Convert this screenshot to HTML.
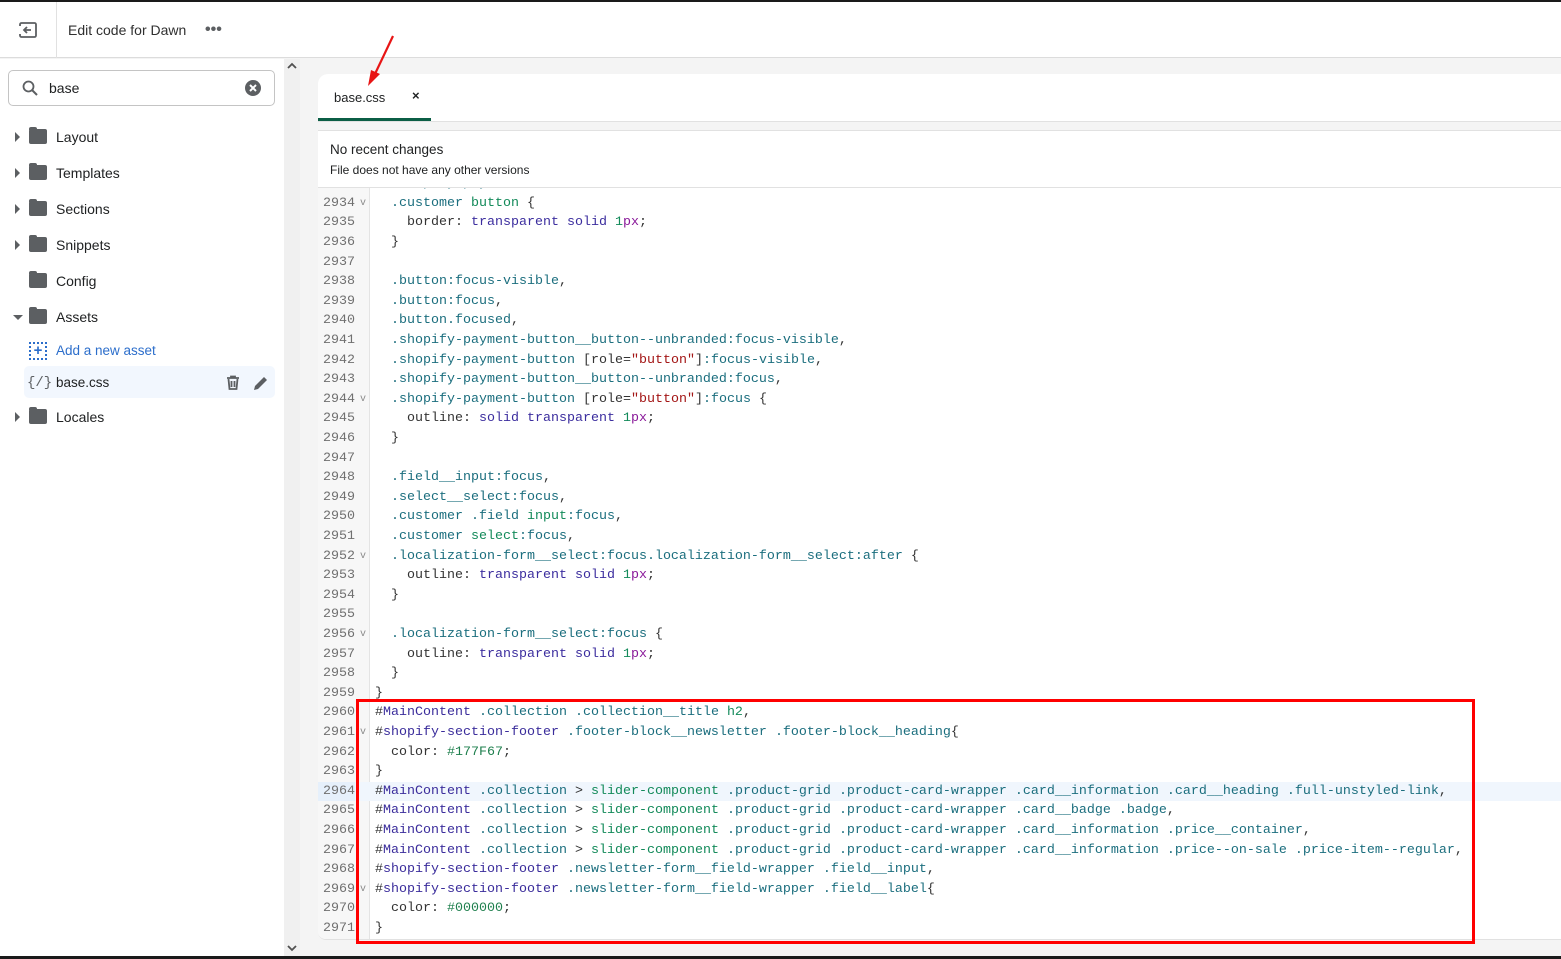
<!DOCTYPE html>
<html><head><meta charset="utf-8">
<style>
*{box-sizing:border-box;margin:0;padding:0}
body{width:1561px;height:959px;overflow:hidden;background:#f4f4f4;font-family:"Liberation Sans",sans-serif;position:relative;color:#202223}
.abs{position:absolute}
#topbar{left:0;top:0;width:1561px;height:2px;background:#1a1a1a}
#header{left:0;top:2px;width:1561px;height:56px;background:#fff;border-bottom:1px solid #dcdcdc}
#side{left:0;top:59px;width:284px;height:898px;background:#fff}
#sb{left:284px;top:59px;width:16px;height:898px;background:#f0f0f0}
#bottom{left:0;top:956px;width:1561px;height:3px;background:#1a1a1a}
.item{position:absolute;left:0;height:24px;font-size:14px;line-height:24px;color:#202223}
.item .tri{position:absolute;left:15px;top:7px;width:0;height:0;border-top:5px solid transparent;border-bottom:5px solid transparent;border-left:5px solid #5c5f62}
.item .tri.down{left:13px;top:10px;border-left:5px solid transparent;border-right:5px solid transparent;border-top:5px solid #5c5f62;border-bottom:0}
.item .fold{position:absolute;left:29px;top:4px;width:18px;height:15px;background:#5c5f62;border-radius:2px}
.item .fold:before{content:"";position:absolute;left:0;top:-2px;width:8px;height:3px;background:#5c5f62;border-radius:2px 2px 0 0}
.item .lbl{position:absolute;left:56px;top:0;white-space:nowrap}
#panel{left:318px;top:74px;width:1243px;height:866px;background:#f4f4f4}
#tabs{left:318px;top:74px;width:1243px;height:48px;background:#fff;border-radius:10px 0 0 0;border-bottom:1px solid #e1e1e1}
#info{left:318px;top:130px;width:1243px;height:58px;background:#fff;border-top:1px solid #e1e1e1;border-bottom:1px solid #e1e1e1}
#code{left:318px;top:188px;width:1243px;height:752px;background:#fff;overflow:hidden;border-radius:0 0 0 8px;border-bottom:1px solid #e1e1e1}
#gut{position:absolute;left:0;top:0;width:52px;height:752px;background:#f7f7f7;border-right:1px solid #e4e4e4}
.ln{position:absolute;left:0;margin-top:2px;width:1243px;height:19.6px;font-family:"Liberation Mono",monospace;font-size:13.33px;line-height:19.6px;white-space:pre;color:#333}
.ln .no{position:absolute;left:0;width:37px;text-align:right;color:#707070}
.ln .fo{position:absolute;left:42px;color:#8a8a8a;font-size:10px}
.ln .tx{position:absolute;left:57px}
.hl{background:#f0f6fd}
.hl .no{background:#e6f0fb}
.c{color:#1b6e7e}.t{color:#138a5a}.i{color:#3a2c9b}.k{color:#3b2d9e}.n{color:#138a5a}.u{color:#8a1a9a}.s{color:#a31515}.h{color:#1e7f4d}
</style></head><body>
<div class="abs" id="topbar"></div>
<div class="abs" id="header">
  <svg class="abs" style="left:19px;top:20px" width="18" height="16" viewBox="0 0 18 16"><rect x="1" y="1" width="16" height="14" rx="1.5" fill="none" stroke="#5c5f62" stroke-width="1.8"/><path d="M12 8H5M8 5L5 8l3 3" fill="none" stroke="#5c5f62" stroke-width="1.8"/><rect x="0" y="4" width="3" height="8" fill="#fff"/></svg>
  <div class="abs" style="left:56px;top:0;width:1px;height:56px;background:#e1e1e1"></div>
  <div class="abs" style="left:68px;top:20px;font-size:14px;color:#303030">Edit code for Dawn</div>
  <div class="abs" style="left:205px;top:19px;font-size:16px;color:#5c5f62;font-weight:bold">•••</div>
</div>
<div class="abs" id="side">
  <div class="abs" style="left:8px;top:11px;width:267px;height:36px;border:1px solid #c4c4c4;border-radius:5px">
    <svg class="abs" style="left:13px;top:9px" width="16" height="16" viewBox="0 0 16 16"><circle cx="6.5" cy="6.5" r="5" fill="none" stroke="#5c5f62" stroke-width="1.8"/><path d="M10 10l5 5" stroke="#5c5f62" stroke-width="2"/></svg>
    <div class="abs" style="left:40px;top:9px;font-size:14px;color:#202223">base</div>
    <svg class="abs" style="left:236px;top:9px" width="16" height="16" viewBox="0 0 16 16"><circle cx="8" cy="8" r="8" fill="#5c5f62"/><path d="M5 5l6 6M11 5l-6 6" stroke="#fff" stroke-width="2"/></svg>
  </div>
  <div class="item" style="top:66px;width:284px"><span class="tri"></span><span class="fold"></span><span class="lbl">Layout</span></div>
  <div class="item" style="top:102px;width:284px"><span class="tri"></span><span class="fold"></span><span class="lbl">Templates</span></div>
  <div class="item" style="top:138px;width:284px"><span class="tri"></span><span class="fold"></span><span class="lbl">Sections</span></div>
  <div class="item" style="top:174px;width:284px"><span class="tri"></span><span class="fold"></span><span class="lbl">Snippets</span></div>
  <div class="item" style="top:210px;width:284px"><span class="fold"></span><span class="lbl">Config</span></div>
  <div class="item" style="top:246px;width:284px"><span class="tri down"></span><span class="fold"></span><span class="lbl">Assets</span></div>
  <div class="item" style="top:280px;width:284px">
    <div class="abs" style="left:29px;top:3px;width:18px;height:18px;border:2px dotted #2c6ecb"></div>
    <div class="abs" style="left:31px;top:0px;width:14px;text-align:center;color:#2c6ecb;font-size:15px;font-weight:bold">+</div>
    <span class="lbl" style="color:#2c6ecb;font-size:13.5px">Add a new asset</span></div>
  <div class="abs" style="left:24px;top:307px;width:251px;height:32px;background:#f2f7fe;border-radius:5px"></div>
  <div class="item" style="top:312px;width:284px">
    <span class="abs" style="left:27px;top:0;font-size:14px;color:#5c5f62;font-family:'Liberation Mono',monospace">{/}</span>
    <span class="lbl" style="font-size:13.5px">base.css</span>
    <svg class="abs" style="left:225px;top:4px" width="16" height="16" viewBox="0 0 16 16"><path d="M2 3h12M6 3V1.5h4V3M3.5 4l1 10h7l1-10M6.5 6v6M9.5 6v6" fill="none" stroke="#5c5f62" stroke-width="1.8"/></svg>
    <svg class="abs" style="left:252px;top:3px" width="18" height="18" viewBox="0 0 18 18"><path d="M2 16l1-4L12 3l3 3-9 9z" fill="#5c5f62"/></svg>
  </div>
  <div class="item" style="top:346px;width:284px"><span class="tri"></span><span class="fold"></span><span class="lbl">Locales</span></div>
</div>
<div class="abs" id="sb">
  <svg class="abs" style="left:3px;top:3px" width="10" height="8" viewBox="0 0 10 8"><path d="M1 6l4-4 4 4" fill="none" stroke="#505050" stroke-width="1.8"/></svg>
  <svg class="abs" style="left:3px;top:885px" width="10" height="8" viewBox="0 0 10 8"><path d="M1 2l4 4 4-4" fill="none" stroke="#505050" stroke-width="1.8"/></svg>
</div>
<div class="abs" id="panel"></div>
<div class="abs" id="tabs">
  <div class="abs" style="left:16px;top:16px;font-size:13px;color:#202223">base.css</div>
  <div class="abs" style="left:94px;top:14px;font-size:13px;color:#202223;font-weight:bold">×</div>
  <div class="abs" style="left:0;top:44px;width:113px;height:3px;background:#0b5e45"></div>
</div>
<svg class="abs" style="left:360px;top:34px" width="40" height="56" viewBox="0 0 40 56"><path d="M33 2L14 42" stroke="#e81515" stroke-width="2.2"/><path d="M8 52L11 36L20 40Z" fill="#e81515"/></svg>
<div class="abs" id="info">
  <div class="abs" style="left:12px;top:11px;font-size:13.5px;color:#202223">No recent changes</div>
  <div class="abs" style="left:12px;top:32px;font-size:12px;color:#202223">File does not have any other versions</div>
</div>
<div class="abs" id="code">
<div id="gut"></div>
<div class="ln" style="top:-15.9px"><span class="no">2933</span><span class="tx">  <span class="c">.shopify-payment__</span></span></div>
<div class="ln" style="top:3.7px"><span class="no">2934</span><span class="fo">v</span><span class="tx">  <span class="c">.customer</span> <span class="t">button</span> {</span></div>
<div class="ln" style="top:23.3px"><span class="no">2935</span><span class="tx">    border: <span class="k">transparent</span> <span class="k">solid</span> <span class="n">1</span><span class="u">px</span>;</span></div>
<div class="ln" style="top:42.9px"><span class="no">2936</span><span class="tx">  }</span></div>
<div class="ln" style="top:62.5px"><span class="no">2937</span><span class="tx"></span></div>
<div class="ln" style="top:82.1px"><span class="no">2938</span><span class="tx">  <span class="c">.button:focus-visible</span>,</span></div>
<div class="ln" style="top:101.7px"><span class="no">2939</span><span class="tx">  <span class="c">.button:focus</span>,</span></div>
<div class="ln" style="top:121.3px"><span class="no">2940</span><span class="tx">  <span class="c">.button.focused</span>,</span></div>
<div class="ln" style="top:140.9px"><span class="no">2941</span><span class="tx">  <span class="c">.shopify-payment-button__button--unbranded:focus-visible</span>,</span></div>
<div class="ln" style="top:160.5px"><span class="no">2942</span><span class="tx">  <span class="c">.shopify-payment-button</span> [role=<span class="s">"button"</span>]<span class="c">:focus-visible</span>,</span></div>
<div class="ln" style="top:180.1px"><span class="no">2943</span><span class="tx">  <span class="c">.shopify-payment-button__button--unbranded:focus</span>,</span></div>
<div class="ln" style="top:199.7px"><span class="no">2944</span><span class="fo">v</span><span class="tx">  <span class="c">.shopify-payment-button</span> [role=<span class="s">"button"</span>]<span class="c">:focus</span> {</span></div>
<div class="ln" style="top:219.3px"><span class="no">2945</span><span class="tx">    outline: <span class="k">solid</span> <span class="k">transparent</span> <span class="n">1</span><span class="u">px</span>;</span></div>
<div class="ln" style="top:238.9px"><span class="no">2946</span><span class="tx">  }</span></div>
<div class="ln" style="top:258.5px"><span class="no">2947</span><span class="tx"></span></div>
<div class="ln" style="top:278.1px"><span class="no">2948</span><span class="tx">  <span class="c">.field__input:focus</span>,</span></div>
<div class="ln" style="top:297.7px"><span class="no">2949</span><span class="tx">  <span class="c">.select__select:focus</span>,</span></div>
<div class="ln" style="top:317.3px"><span class="no">2950</span><span class="tx">  <span class="c">.customer</span> <span class="c">.field</span> <span class="t">input</span><span class="c">:focus</span>,</span></div>
<div class="ln" style="top:336.9px"><span class="no">2951</span><span class="tx">  <span class="c">.customer</span> <span class="t">select</span><span class="c">:focus</span>,</span></div>
<div class="ln" style="top:356.5px"><span class="no">2952</span><span class="fo">v</span><span class="tx">  <span class="c">.localization-form__select:focus.localization-form__select:after</span> {</span></div>
<div class="ln" style="top:376.1px"><span class="no">2953</span><span class="tx">    outline: <span class="k">transparent</span> <span class="k">solid</span> <span class="n">1</span><span class="u">px</span>;</span></div>
<div class="ln" style="top:395.7px"><span class="no">2954</span><span class="tx">  }</span></div>
<div class="ln" style="top:415.3px"><span class="no">2955</span><span class="tx"></span></div>
<div class="ln" style="top:434.9px"><span class="no">2956</span><span class="fo">v</span><span class="tx">  <span class="c">.localization-form__select:focus</span> {</span></div>
<div class="ln" style="top:454.5px"><span class="no">2957</span><span class="tx">    outline: <span class="k">transparent</span> <span class="k">solid</span> <span class="n">1</span><span class="u">px</span>;</span></div>
<div class="ln" style="top:474.1px"><span class="no">2958</span><span class="tx">  }</span></div>
<div class="ln" style="top:493.7px"><span class="no">2959</span><span class="tx">}</span></div>
<div class="ln" style="top:513.3px"><span class="no">2960</span><span class="tx">#<span class="i">MainContent</span> <span class="c">.collection</span> <span class="c">.collection__title</span> <span class="t">h2</span>,</span></div>
<div class="ln" style="top:532.9px"><span class="no">2961</span><span class="fo">v</span><span class="tx">#<span class="i">shopify-section-footer</span> <span class="c">.footer-block__newsletter</span> <span class="c">.footer-block__heading</span>{</span></div>
<div class="ln" style="top:552.5px"><span class="no">2962</span><span class="tx">  color: <span class="h">#177F67</span>;</span></div>
<div class="ln" style="top:572.1px"><span class="no">2963</span><span class="tx">}</span></div>
<div class="ln hl" style="top:591.7px"><span class="no">2964</span><span class="tx">#<span class="i">MainContent</span> <span class="c">.collection</span> &gt; <span class="t">slider-component</span> <span class="c">.product-grid</span> <span class="c">.product-card-wrapper</span> <span class="c">.card__information</span> <span class="c">.card__heading</span> <span class="c">.full-unstyled-link</span>,</span></div>
<div class="ln" style="top:611.3px"><span class="no">2965</span><span class="tx">#<span class="i">MainContent</span> <span class="c">.collection</span> &gt; <span class="t">slider-component</span> <span class="c">.product-grid</span> <span class="c">.product-card-wrapper</span> <span class="c">.card__badge</span> <span class="c">.badge</span>,</span></div>
<div class="ln" style="top:630.9px"><span class="no">2966</span><span class="tx">#<span class="i">MainContent</span> <span class="c">.collection</span> &gt; <span class="t">slider-component</span> <span class="c">.product-grid</span> <span class="c">.product-card-wrapper</span> <span class="c">.card__information</span> <span class="c">.price__container</span>,</span></div>
<div class="ln" style="top:650.5px"><span class="no">2967</span><span class="tx">#<span class="i">MainContent</span> <span class="c">.collection</span> &gt; <span class="t">slider-component</span> <span class="c">.product-grid</span> <span class="c">.product-card-wrapper</span> <span class="c">.card__information</span> <span class="c">.price--on-sale</span> <span class="c">.price-item--regular</span>,</span></div>
<div class="ln" style="top:670.1px"><span class="no">2968</span><span class="tx">#<span class="i">shopify-section-footer</span> <span class="c">.newsletter-form__field-wrapper</span> <span class="c">.field__input</span>,</span></div>
<div class="ln" style="top:689.7px"><span class="no">2969</span><span class="fo">v</span><span class="tx">#<span class="i">shopify-section-footer</span> <span class="c">.newsletter-form__field-wrapper</span> <span class="c">.field__label</span>{</span></div>
<div class="ln" style="top:709.3px"><span class="no">2970</span><span class="tx">  color: <span class="h">#000000</span>;</span></div>
<div class="ln" style="top:728.9px"><span class="no">2971</span><span class="tx">}</span></div>
</div>
<div class="abs" style="left:356px;top:699px;width:1119px;height:245px;border:3px solid #f00"></div>
<div class="abs" id="bottom"></div>
</body></html>
